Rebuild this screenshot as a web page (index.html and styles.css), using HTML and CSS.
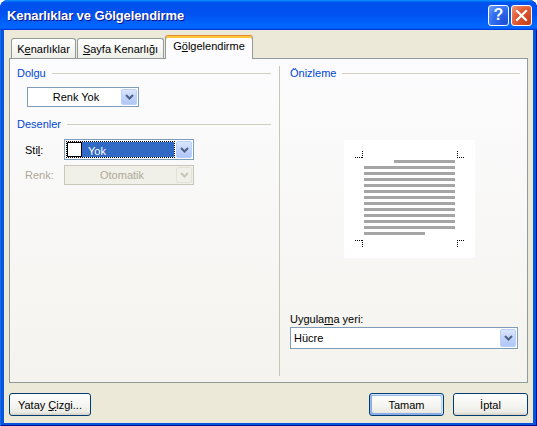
FILE: index.html
```html
<!DOCTYPE html>
<html lang="tr">
<head>
<meta charset="utf-8">
<title>Kenarlıklar ve Gölgelendirme</title>
<link rel="stylesheet" href="styles.css">
</head>
<body>
<div class="window">
  <div class="titlebar">
    <span class="title">Kenarlıklar ve Gölgelendirme</span>
    <span class="tb-btn tb-help">?</span>
    <span class="tb-btn tb-close">
      <svg width="13" height="13" viewBox="0 0 13 13"><path d="M2 2 L11 11 M11 2 L2 11" stroke="#fff" stroke-width="2.2" stroke-linecap="square" fill="none"/></svg>
    </span>
  </div>
  <div class="client">
    <div class="tabs">
      <div class="tab tab-borders">K<u>e</u>narlıklar</div>
      <div class="tab tab-page"><u>S</u>ayfa Kenarlığı</div>
      <div class="tab tab-active">G<u>ö</u>lgelendirme</div>
    </div>
    <div class="panel">
      <div class="col-left">
        <div class="group-title">Dolgu</div>
        <div class="combo combo-fill">
          <span class="combo-text centered">Renk Yok</span>
          <span class="combo-arrow"><svg width="9" height="6" viewBox="0 0 9 6"><path d="M1 1 L4.5 4.5 L8 1" stroke="#4d6185" stroke-width="2" fill="none"/></svg></span>
        </div>
        <div class="group-title group-patterns">Desenler</div>
        <div class="field-row row-style">
          <span class="field-label">Sti<u>l</u>:</span>
          <div class="combo combo-style">
            <span class="focus-area">
              <span class="swatch"></span>
              <span class="selected-item">Yok</span>
            </span>
            <span class="combo-arrow"><svg width="9" height="6" viewBox="0 0 9 6"><path d="M1 1 L4.5 4.5 L8 1" stroke="#4d6185" stroke-width="2" fill="none"/></svg></span>
          </div>
        </div>
        <div class="field-row row-color">
          <span class="field-label disabled">Renk:</span>
          <div class="combo combo-disabled">
            <span class="combo-text centered">Otomatik</span>
            <span class="combo-arrow"><svg width="9" height="6" viewBox="0 0 9 6"><path d="M1 1 L4.5 4.5 L8 1" stroke="#c9c7ba" stroke-width="2" fill="none"/></svg></span>
          </div>
        </div>
      </div>
      <div class="divider"></div>
      <div class="col-right">
        <div class="group-title">Önizleme</div>
        <div class="preview">
          <svg width="131" height="118" viewBox="0 0 131 118" shape-rendering="crispEdges">
            <g fill="#a5a5a5">
              <rect x="50" y="20" width="61" height="3"/>
              <rect x="20" y="26" width="91" height="3"/>
              <rect x="20" y="32" width="91" height="3"/>
              <rect x="20" y="38" width="91" height="3"/>
              <rect x="20" y="44" width="91" height="3"/>
              <rect x="20" y="50" width="91" height="3"/>
              <rect x="20" y="56" width="91" height="3"/>
              <rect x="20" y="62" width="91" height="3"/>
              <rect x="20" y="68" width="91" height="3"/>
              <rect x="20" y="74" width="91" height="3"/>
              <rect x="20" y="80" width="91" height="3"/>
              <rect x="20" y="86" width="91" height="3"/>
              <rect x="20" y="92" width="61" height="3"/>
            </g>
            <g stroke="#000" stroke-width="1" stroke-dasharray="1 1" fill="none">
              <path d="M11 17.5 H19 M18.5 11 V18"/>
              <path d="M113 17.5 H121 M113.5 11 V18"/>
              <path d="M11 100.5 H19 M18.5 100 V108"/>
              <path d="M113 100.5 H121 M113.5 100 V108"/>
            </g>
          </svg>
        </div>
        <div class="apply-label">Uygula<u>m</u>a yeri:</div>
        <div class="combo combo-apply">
          <span class="combo-text">Hücre</span>
          <span class="combo-arrow"><svg width="9" height="6" viewBox="0 0 9 6"><path d="M1 1 L4.5 4.5 L8 1" stroke="#4d6185" stroke-width="2" fill="none"/></svg></span>
        </div>
      </div>
    </div>
    <div class="footer">
      <button class="btn btn-wide">Yatay <u>Ç</u>izgi...</button>
      <span class="spacer"></span>
      <button class="btn btn-default">Tamam</button>
      <button class="btn btn-cancel">İptal</button>
    </div>
  </div>
</div>
</body>
</html>
```

FILE: styles.css
```css
* { box-sizing: border-box; }

body {
  margin: 0;
  background: #ffffff;
  font-family: "Liberation Sans", Arial, sans-serif;
  font-size: 11px;
  color: #000;
}

u { text-decoration: underline; text-underline-offset: 1px; }

.window {
  width: 537px;
  height: 426px;
  display: flex;
  flex-direction: column;
  background: #0855dd;
  border-radius: 8px 8px 0 0;
  padding: 0 4px 3px;
  box-shadow: inset 1px 0 #166aee, inset -1px 0 #00138c, inset 0 -1px #00138c;
  overflow: hidden;
}

.titlebar {
  height: 30px;
  margin: 0 -4px;
  border-radius: 8px 8px 0 0;
  background: linear-gradient(180deg, #0997ff, #0053ee 8%, #0050ee 40%, #0066ff 88%, #0066ff 93%, #005bff 95%, #003dd7 96%, #003dd7);
  display: flex;
  align-items: center;
  padding: 0 5px 0 7px;
}

.title {
  flex: 1;
  color: #fff;
  font-weight: bold;
  font-size: 13px;
  text-shadow: 1px 1px #0f1089;
  letter-spacing: -0.1px;
  padding-top: 1px;
}

.tb-btn {
  width: 21px;
  height: 21px;
  border: 1px solid #fff;
  border-radius: 3px;
  display: flex;
  align-items: center;
  justify-content: center;
  color: #fff;
}

.tb-help {
  margin-right: 2px;
  background: radial-gradient(circle at 85% 85%, #1c4fd6 0, #2f6cf2 55%, #73a0fb 100%);
  font-weight: bold;
  font-size: 16px;
  font-family: "Liberation Sans", Arial, sans-serif;
}

.tb-close {
  background: radial-gradient(circle at 85% 85%, #c8401c 0, #e0562e 55%, #f19b7d 100%);
}

.client {
  flex: 1;
  background: #ece9d8;
  display: flex;
  flex-direction: column;
  padding: 5px 5px 0 5px;
}

.tabs {
  display: flex;
  align-items: flex-end;
  height: 23px;
  padding-left: 2px;
  position: relative;
  z-index: 1;
}

.tab {
  height: 20px;
  border: 1px solid #919b9c;
  border-bottom: none;
  border-radius: 3px 3px 0 0;
  background: linear-gradient(#ffffff, #fafaf9 26%, #f0f0ea 95%, #ecebe6);
  display: flex;
  align-items: center;
  justify-content: center;
  padding-top: 1px;
}

.tab-borders { width: 65px; }
.tab-page { width: 87px; margin-left: 1px; }

.tab-active {
  width: 88px;
  height: 24px;
  margin-bottom: -1px;
  margin-left: 1px;
  background: #fcfcfe;
  border-top: 1px solid #e68b2c;
  border-radius: 3px 3px 0 0;
  box-shadow: inset 0 2px #ffc73c;
  padding-top: 0;
  padding-bottom: 3px;
}

.panel {
  height: 325px;
  border: 1px solid #919b9c;
  background: linear-gradient(#fcfcfe, #f4f3ee);
  display: flex;
}

.col-left {
  width: 269px;
  padding: 8px 8px 0 7px;
  display: flex;
  flex-direction: column;
  align-items: flex-start;
}

.divider {
  width: 1px;
  background: #c9c6b8;
  margin: 7px 0 6px;
}

.col-right {
  flex: 1;
  padding: 8px 7px 0 10px;
  display: flex;
  flex-direction: column;
  align-items: flex-start;
}

.group-title {
  align-self: stretch;
  display: flex;
  align-items: center;
  gap: 6px;
  height: 13px;
  line-height: 13px;
  color: #0046d5;
}

.group-title::after {
  content: "";
  flex: 1;
  height: 1px;
  background: #d0d0bf;
}

.group-patterns { margin-top: 11px; }

.combo {
  display: flex;
  height: 20px;
  border: 1px solid #7f9db9;
  background: #fff;
  padding: 1px;
}

.combo-text {
  flex: 1;
  display: flex;
  align-items: center;
  padding-left: 2px;
}

.combo-text.centered { justify-content: center; }

.combo-arrow {
  width: 16px;
  border: 1px solid #b9cffc;
  border-radius: 2px;
  background: linear-gradient(#dbe6fd, #c2d4fb 50%, #b1c7f7);
  display: flex;
  align-items: center;
  justify-content: center;
}

.combo-fill {
  width: 112px;
  margin: 7px 0 0 10px;
}

.field-row {
  display: flex;
  align-items: center;
  margin-left: 8px;
}

.row-style { margin-top: 8px; }
.row-color { margin-top: 5px; }

.field-label { width: 39px; }
.field-label.disabled { color: #aca899; }

.combo-style {
  width: 130px;
  height: 21px;
}

.focus-area {
  flex: 1;
  display: flex;
  border: 1px dotted #000;
  margin-right: 1px;
}

.swatch {
  width: 15px;
  background: #fff;
  border: 1px solid #000;
}

.selected-item {
  flex: 1;
  background: #316ac5;
  color: #fff;
  display: flex;
  align-items: center;
  padding: 2px 0 0 6px;
}

.combo-disabled {
  width: 130px;
  border-color: #c9c7ba;
  background: #f1f0e8;
  color: #aca899;
}

.combo-disabled .combo-arrow {
  border-color: #e4e2d8;
  background: #f1f0e8;
}

.preview {
  width: 131px;
  height: 118px;
  margin: 60px 0 0 54px;
  background: #fff;
  display: flex;
}

.apply-label { margin-top: 55px; height: 13px; line-height: 13px; }

.combo-apply {
  width: 228px;
  height: 22px;
  margin-top: 1px;
}

.footer {
  display: flex;
  align-items: flex-start;
  margin-top: 10px;
}

.spacer { flex: 1; }

.btn {
  height: 23px;
  border: 1px solid #003c74;
  border-radius: 3px;
  background: linear-gradient(#ffffff, #f3f3ef 60%, #ecebe6 86%, #d6d0c5);
  font-family: "Liberation Sans", Arial, sans-serif;
  font-size: 11px;
  color: #000;
  padding: 0;
}

.btn-wide { width: 82px; }
.btn-default {
  width: 75px;
  box-shadow: inset -1px 1px #cee7ff, inset 1px 2px #98b8ea, inset -2px 2px #bcd4f6, inset 1px -1px #89ade4, inset 2px -2px #89ade4;
}
.btn-cancel { width: 75px; margin-left: 9px; }
```
